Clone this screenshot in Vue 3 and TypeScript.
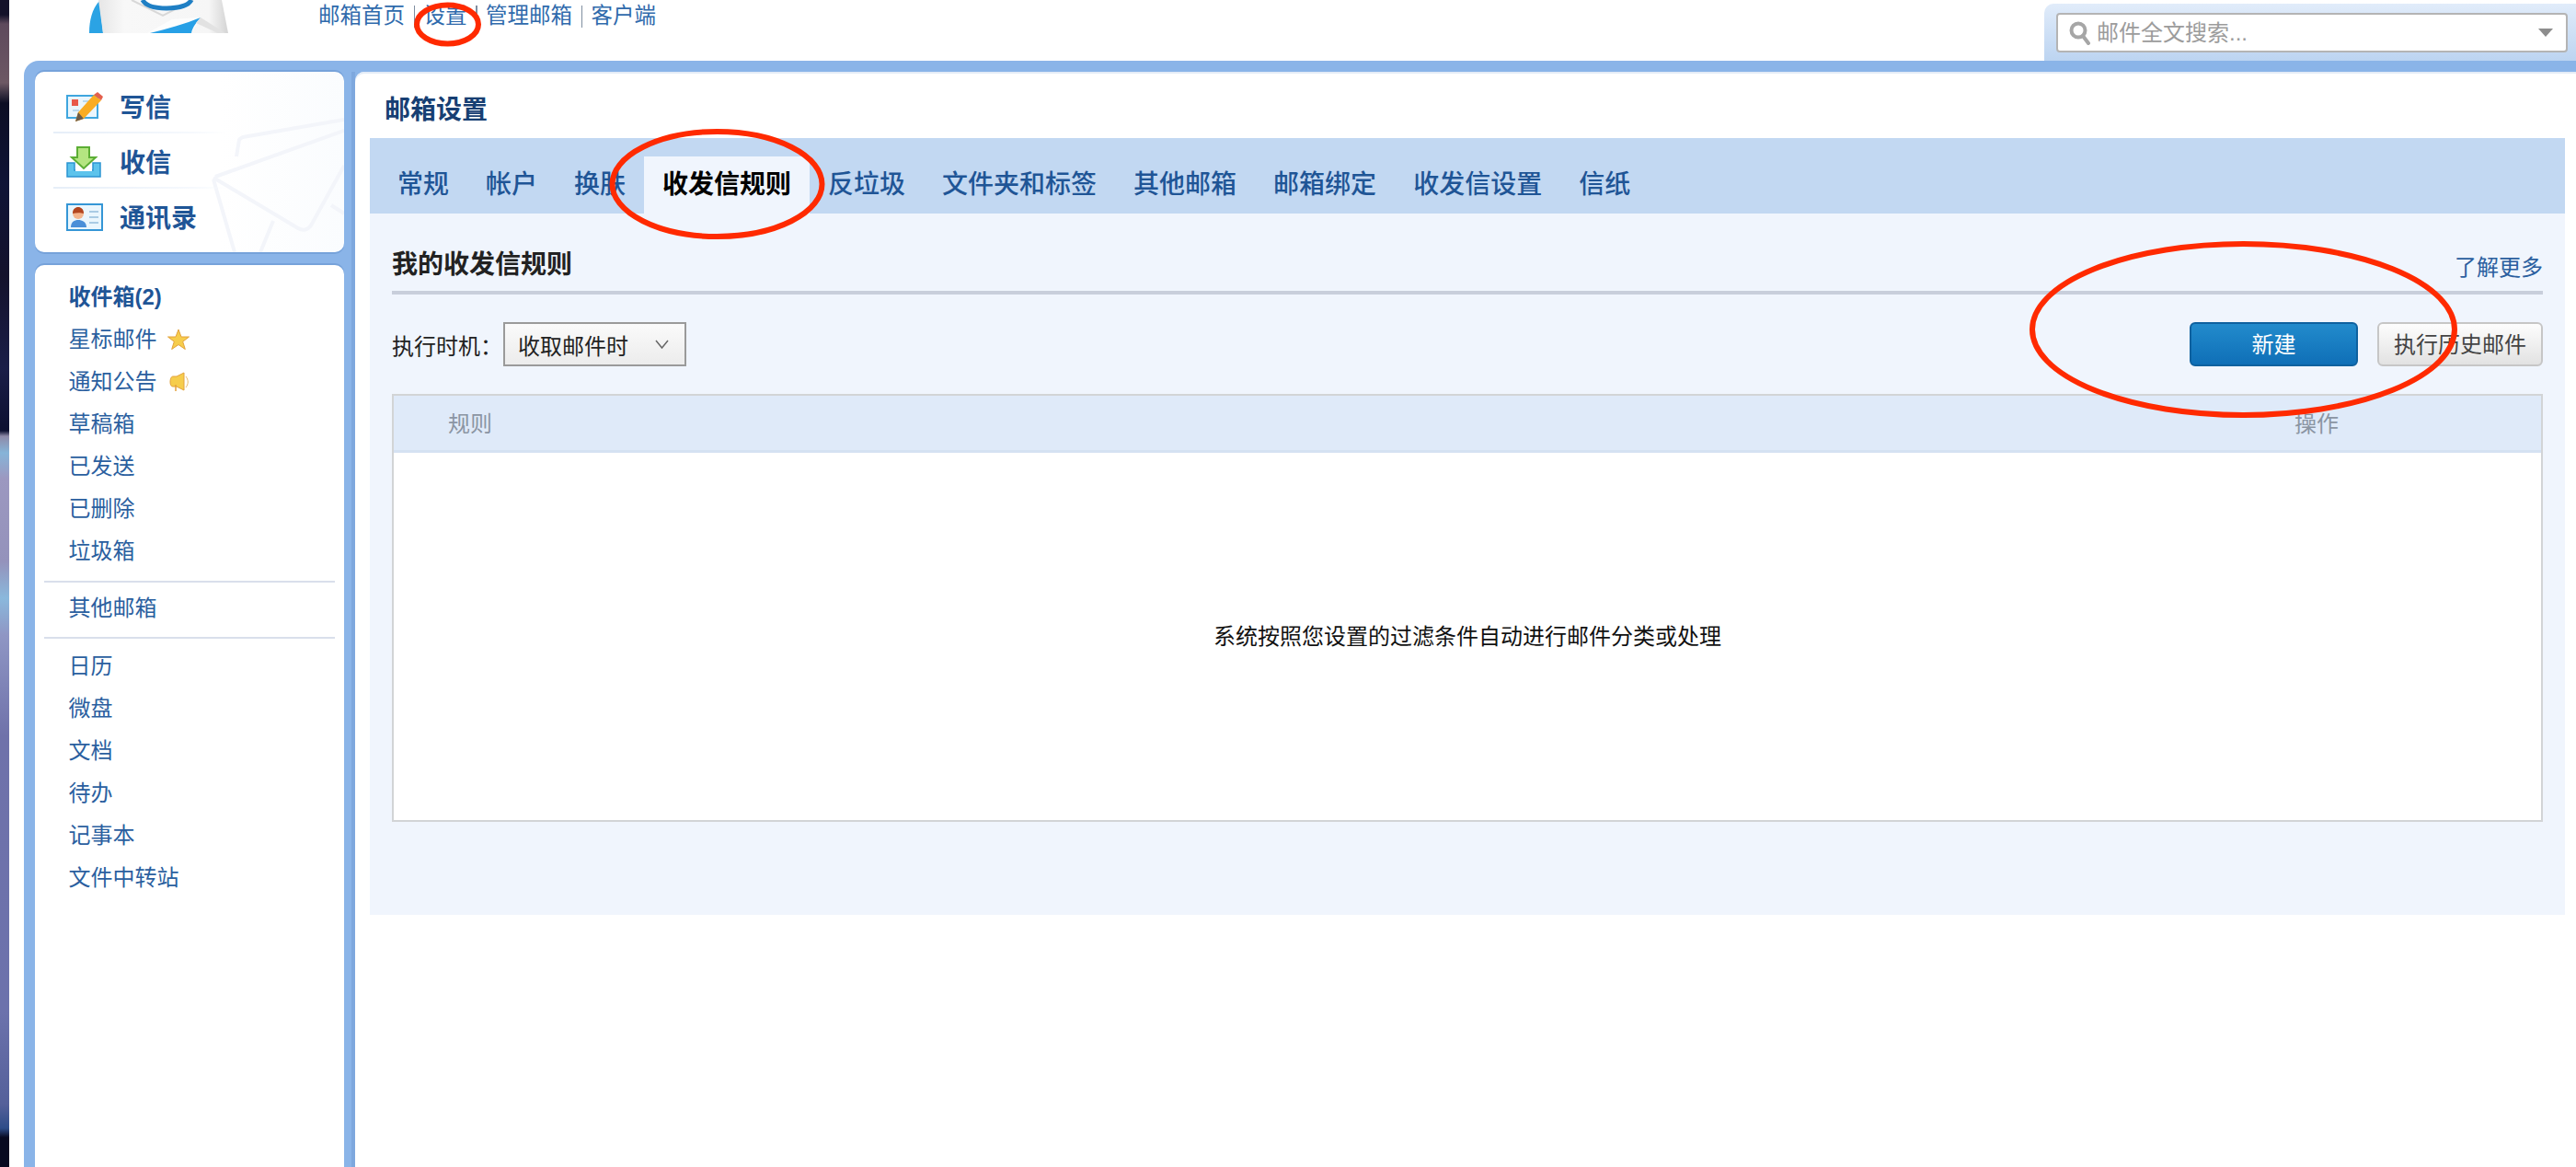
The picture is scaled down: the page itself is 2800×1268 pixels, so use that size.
<script setup lang="ts">
const navLinks = ['邮箱首页', '设置', '管理邮箱', '客户端']
const tabs = ['常规', '帐户', '换肤', '收发信规则', '反垃圾', '文件夹和标签', '其他邮箱', '邮箱绑定', '收发信设置', '信纸']
const activeTab = '收发信规则'
const folders = ['草稿箱', '已发送', '已删除', '垃圾箱']
const tools = ['日历', '微盘', '文档', '待办', '记事本', '文件中转站']
</script>

<template>
  <div class="page">
    <div class="wallpaper"></div>
    <div class="shell">
      <header class="topbar">
        <div class="logo">
          <svg width="151" height="36" viewBox="0 0 151 36">
            <defs>
              <linearGradient id="envelope" x1="0" x2="1" y1="0" y2="0">
                <stop offset="0" stop-color="#e6e6e6" />
                <stop offset=".2" stop-color="#f8f8f8" />
                <stop offset=".85" stop-color="#f6f6f6" />
                <stop offset="1" stop-color="#d4d4d4" />
              </linearGradient>
            </defs>
            <path d="M11 1C3 10 0 22 0 36h15L11 1z" fill="#2ba3e4" />
            <path d="M10 0h134l7 36H15z" fill="url(#envelope)" />
            <path d="M46 0l34 17L113 0" fill="none" stroke="#d8d8d8" stroke-width="2" />
            <path d="M58 0c3 6 13 9 26 9s24-3 27-9" fill="#fff" stroke="#1f7fc4" stroke-width="5" />
            <path d="M63 36l27-15 31-2-10 17z" fill="#fdfdfd" />
            <path d="M66 36c20-5 38-10 55-17-5 6-9 11-10 17z" fill="#27a0e6" />
            <path d="M121 19l27 17h-8l-24-11z" fill="#e2e2e2" />
          </svg>
        </div>
        <nav class="links">
          <template v-for="(link, i) in navLinks" :key="link">
            <i v-if="i" class="bar"></i>
            <a>{{ link }}</a>
          </template>
        </nav>
        <div class="search-wrap">
          <div class="search">
            <svg class="lens" width="24" height="26" viewBox="0 0 24 26">
              <circle cx="10" cy="10" r="7.500" fill="none" stroke="#a6a6a6" stroke-width="4" />
              <path d="M15 16l6 8" stroke="#a6a6a6" stroke-width="4" stroke-linecap="round" />
            </svg>
            <span class="placeholder">邮件全文搜索...</span>
            <i class="caret"></i>
          </div>
        </div>
      </header>

      <div class="frame">
        <aside class="sidebar">
          <section class="quick panel">
            <svg class="watermark" width="200" height="176" viewBox="0 0 200 176">
              <g fill="none" stroke="#f3f5fa" stroke-width="4" stroke-linejoin="round">
                <path d="M83 72l3-18c1-2 2-2 4-3l110-19" />
                <path d="M60 94l140-50" />
                <path d="M58 97l23 79" />
                <path d="M58 95l92 55c5 3 10 2 14-3l36-65" />
                <path d="M123 142l-14 34M186 125l14 9" />
              </g>
            </svg>
            <a class="quick-row">
              <svg class="qi" width="40" height="32" viewBox="0 0 40 32">
                <rect x="1" y="4" width="33" height="24" fill="#eaf6fd" stroke="#3fa6de" stroke-width="2" />
                <rect x="6" y="8" width="7" height="7" fill="#e8594a" />
                <path d="M18 10h11M7 20h7" stroke="#b9d8ee" stroke-width="2" />
                <path d="M30 3l8 6-19 20-9 3 3-10z" fill="#f9ac22" />
                <path d="M30 3l4-3 6 5-2 4z" fill="#e4604d" />
                <path d="M10 32l3-10 6 7z" fill="#6b5a48" />
              </svg>
              <span>写信</span>
            </a>
            <a class="quick-row">
              <svg class="qi" width="38" height="34" viewBox="0 0 38 34">
                <path d="M1 18h8v8h20v-8h8v15H1z" fill="#5cc3ec" stroke="#2a94d2" stroke-width="1.500" />
                <path d="M10 26h18" stroke="#fff" stroke-width="2" />
                <path d="M12 1h13v11h7L19 24 6 12h6z" fill="#b4e581" stroke="#5cae35" stroke-width="2" />
              </svg>
              <span>收信</span>
            </a>
            <a class="quick-row">
              <svg class="qi" width="40" height="30" viewBox="0 0 40 30">
                <rect x="1" y="1" width="38" height="28" fill="#eaf6fd" stroke="#3596d6" stroke-width="2" />
                <path d="M25 9h10M25 15h10M25 21h10" stroke="#a9cbe4" stroke-width="2" />
                <path d="M5 26c0-6 4-8 8-8s9 2 9 8z" fill="#4a8fd8" />
                <circle cx="13" cy="11" r="6" fill="#f4b48c" />
                <path d="M7 11c0-5 3-7 6-7s6 2 6 7c-3-1-8-1-12 0z" fill="#b2451f" />
              </svg>
              <span>通讯录</span>
            </a>
          </section>

          <section class="folders panel">
            <a class="item strong">收件箱(2)</a>
            <a class="item">星标邮件
              <svg class="after star" width="24" height="24" viewBox="0 0 24 24">
                <path d="M12 1l3 8h8.500l-6.800 5.200 2.600 8.300-7.300-5-7.300 5 2.600-8.300L.500 9H9z" fill="#f6cd4c" stroke="#e3a23c" />
              </svg>
            </a>
            <a class="item">通知公告
              <svg class="after horn" width="22" height="22" viewBox="0 0 22 22">
                <path d="M16 1v19l-8-4H4C2 16 1 14 1 11s1-6 3-6h4z" fill="#f6cd4c" stroke="#e3a23c" />
                <path d="M7 14v7" stroke="#e3a23c" stroke-width="1.500" />
                <path d="M18 5c3 4 3 8 0 12" fill="none" stroke="#e8bb70" />
              </svg>
            </a>
            <a v-for="f in folders" :key="f" class="item">{{ f }}</a>
            <hr class="rule first" />
            <a class="item">其他邮箱</a>
            <hr class="rule second" />
            <a v-for="t in tools" :key="t" class="item">{{ t }}</a>
          </section>
        </aside>

        <main class="main">
          <h1 class="title">邮箱设置</h1>
          <div class="settings">
            <div class="tabs">
              <a v-for="t in tabs" :key="t" class="tab" :class="{ active: t === activeTab }">{{ t }}</a>
            </div>
            <div class="content">
              <div class="section-head">
                <h2>我的收发信规则</h2>
                <a>了解更多</a>
              </div>
              <div class="toolbar">
                <span class="label">执行时机：</span>
                <div class="select">
                  <span>收取邮件时</span>
                  <svg width="15" height="10" viewBox="0 0 15 10">
                    <path d="M1 1l6.500 8 6.500-8" fill="none" stroke="#666" stroke-width="1.500" />
                  </svg>
                </div>
                <button class="btn primary">新建</button>
                <button class="btn plain">执行历史邮件</button>
              </div>
              <div class="table">
                <div class="thead">
                  <span>规则</span>
                  <span>操作</span>
                </div>
                <div class="tbody">系统按照您设置的过滤条件自动进行邮件分类或处理</div>
              </div>
            </div>
          </div>
        </main>
      </div>
    </div>

    <svg class="marks" width="2800" height="1268" viewBox="0 0 2800 1268">
      <g fill="none" stroke="#ff2a00" stroke-width="6">
        <ellipse cx="486.500" cy="26.500" rx="33.500" ry="21" />
        <ellipse cx="779.500" cy="200" rx="114" ry="57" />
        <ellipse cx="2438.500" cy="358" rx="229.500" ry="93" />
      </g>
    </svg>
  </div>
</template>

<style>
html, body { margin: 0; background: #fff; }
</style>

<style scoped>
.page {
  position: relative;
  display: flex;
  width: 2800px;
  height: 1268px;
  overflow: hidden;
  background: #fff;
  font-family: "Liberation Sans", "Noto Sans CJK SC", sans-serif;
  font-size: 24px;
  color: #111;
}
.wallpaper {
  flex: 0 0 10px;
  background: linear-gradient(180deg,
    #14122a 0, #14122a 16px, #5e4a5c 26px, #6d5864 90px, #0c0e24 112px,
    #0f1436 200px, #14122c 300px, #1a1e48 400px, #0d1030 468px,
    #8e8aa8 474px, #86b4d8 492px, #9c98c0 520px, #9492bb 610px, #8ab8dc 650px,
    #8f96c4 690px, #6f72aa 800px, #6c72ac 1100px, #54609a 1200px,
    #2d4c88 1226px, #070a20 1236px, #070a20 1268px);
}
.shell { flex: 1; display: flex; flex-direction: column; min-width: 0; }
.topbar { display: flex; height: 66px; flex: none; }
.logo { width: 151px; height: 36px; margin-left: 87px; flex: none; }
.logo svg { display: block; }
.links {
  display: flex;
  align-items: flex-start;
  margin-left: 98px;
  height: 34px;
  line-height: 34px;
  font-size: 23.500px;
  color: #2f6aac;
}
.links .bar { width: 1.500px; height: 24px; margin: 6px 9.500px 0; background: #7f8ea0; }
.search-wrap {
  margin-left: auto;
  margin-top: 4px;
  width: 578px;
  height: 62px;
  padding: 10px 9px 0 13px;
  box-sizing: border-box;
  border-top-left-radius: 10px;
  background: linear-gradient(180deg, #e1ecfa, #bcd4f1);
}
.search {
  display: flex;
  align-items: center;
  height: 43px;
  box-sizing: border-box;
  padding: 0 14px 0 12px;
  background: #fff;
  border: 2px solid #b4b4b4;
  border-radius: 4px;
}
.lens { flex: none; }
.placeholder { margin-left: 6px; color: #9c9c9c; line-height: 1; }
.caret {
  margin-left: auto;
  width: 0;
  height: 0;
  border-left: 8px solid transparent;
  border-right: 8px solid transparent;
  border-top: 9px solid #8d8d8d;
}
.frame {
  flex: 1;
  display: flex;
  min-height: 0;
  margin-left: 16px;
  padding-top: 12px;
  background: #8ab4e8;
  border-top-left-radius: 16px;
}
.sidebar {
  flex: 0 0 336px;
  display: flex;
  flex-direction: column;
  gap: 14px;
  padding: 0 12px;
  box-shadow: inset -4px 0 0 #7ea8de;
}
.panel {
  position: relative;
  background: #fff;
  border-radius: 10px 10px 0 0;
  box-shadow: 0 -2px 0 #76a2da;
}
.quick {
  flex: 0 0 196px;
  height: 196px;
  overflow: hidden;
  border-radius: 10px;
  box-shadow: 0 -2px 0 #76a2da, 0 2px 0 #76a2da;
  background: linear-gradient(90deg, #fff 60%, #fafcfe);
}
.watermark { position: absolute; right: 0; bottom: 0; }
.quick-row {
  position: relative;
  display: flex;
  align-items: center;
  height: 60px;
  margin: 7px 0 -7px 20px;
  padding-left: 72px;
  color: #1f5596;
  font-size: 28px;
  font-weight: 700;
  background-image: linear-gradient(90deg, #e6eef8, #f6f9fd 80%, transparent);
  background-size: 188px 2px;
  background-repeat: no-repeat;
  background-position: 0 100%;
}
.quick-row:last-of-type { background-image: none; }
.qi { position: absolute; left: 14px; top: 50%; transform: translateY(-50%); margin-top: 1px; }
.folders {
  flex: 1;
  padding: 12px 10px 0;
  color: #2b5f9f;
}
.item {
  display: flex;
  align-items: center;
  height: 46px;
  padding-left: 26.500px;
  line-height: 46px;
}
.item.strong { font-weight: 700; color: #1f5596; }
.star { margin-left: 11px; }
.horn { margin-left: 13px; }
.rule { height: 2px; border: 0; background: #d9dfeb; }
.rule.first { margin: 9px 0 5px; }
.rule.second { margin: 8px 0 7px; }
.main {
  flex: 1;
  min-width: 0;
  background: #fff;
  border-top-left-radius: 10px;
  box-shadow: inset 0 2px 0 #e4ecf7;
}
.title {
  margin: 0;
  padding: 24px 0 12px 32px;
  font-size: 28px;
  line-height: 36px;
  font-weight: 700;
  color: #173f73;
}
.settings { margin: 0 12px 0 16px; }
.tabs {
  display: flex;
  height: 82px;
  box-sizing: border-box;
  padding: 20px 0 0 10px;
  background: #c2d8f2;
}
.tab {
  height: 62px;
  padding: 0 20px;
  line-height: 62px;
  font-size: 28px;
  font-weight: 500;
  color: #1f5596;
}
.tab.active { background: #f0f5fd; color: #000; font-weight: 700; }
.content { padding: 0 24px 101px; background: #f0f5fd; }
.section-head {
  display: flex;
  justify-content: space-between;
  align-items: center;
  height: 88px;
  box-sizing: border-box;
  padding: 36px 0 8px;
  border-bottom: 4px solid #c8cedb;
}
.section-head h2 { margin: 0; font-size: 28px; line-height: 40px; font-weight: 700; color: #222; }
.section-head a { color: #2b5f9f; }
.toolbar { display: flex; align-items: center; height: 48px; margin-top: 30px; }
.label { width: 121px; color: #222; }
.select {
  display: flex;
  align-items: center;
  justify-content: space-between;
  width: 199px;
  height: 48px;
  box-sizing: border-box;
  padding: 0 17px 0 14px;
  border: 2px solid #9a9a9a;
  background: linear-gradient(180deg, #fafafa, #ececec);
  color: #222;
}
.btn {
  height: 48px;
  box-sizing: border-box;
  padding: 0 0 4px;
  border-radius: 6px;
  font: inherit;
}
.primary {
  width: 183px;
  margin-left: auto;
  border: 2px solid #0e619f;
  background: linear-gradient(180deg, #228bcc, #0f6fb7);
  color: #fff;
}
.plain {
  width: 180px;
  margin-left: 21px;
  border: 2px solid #c6c6c6;
  background: linear-gradient(180deg, #fdfdfd, #e2e2e2);
  color: #444;
}
.table {
  margin-top: 30px;
  height: 465px;
  box-sizing: border-box;
  border: 2px solid #d2d4d6;
  background: #fff;
}
.thead {
  display: flex;
  justify-content: space-between;
  align-items: center;
  height: 62px;
  box-sizing: border-box;
  padding: 0 220px 2px 59px;
  background: #dfeaf9;
  border-bottom: 3px solid #d5e2f2;
  color: #8b95a3;
}
.tbody {
  display: flex;
  align-items: center;
  justify-content: center;
  height: 395px;
  color: #111;
}
.marks { position: absolute; left: 0; top: 0; pointer-events: none; }
</style>
